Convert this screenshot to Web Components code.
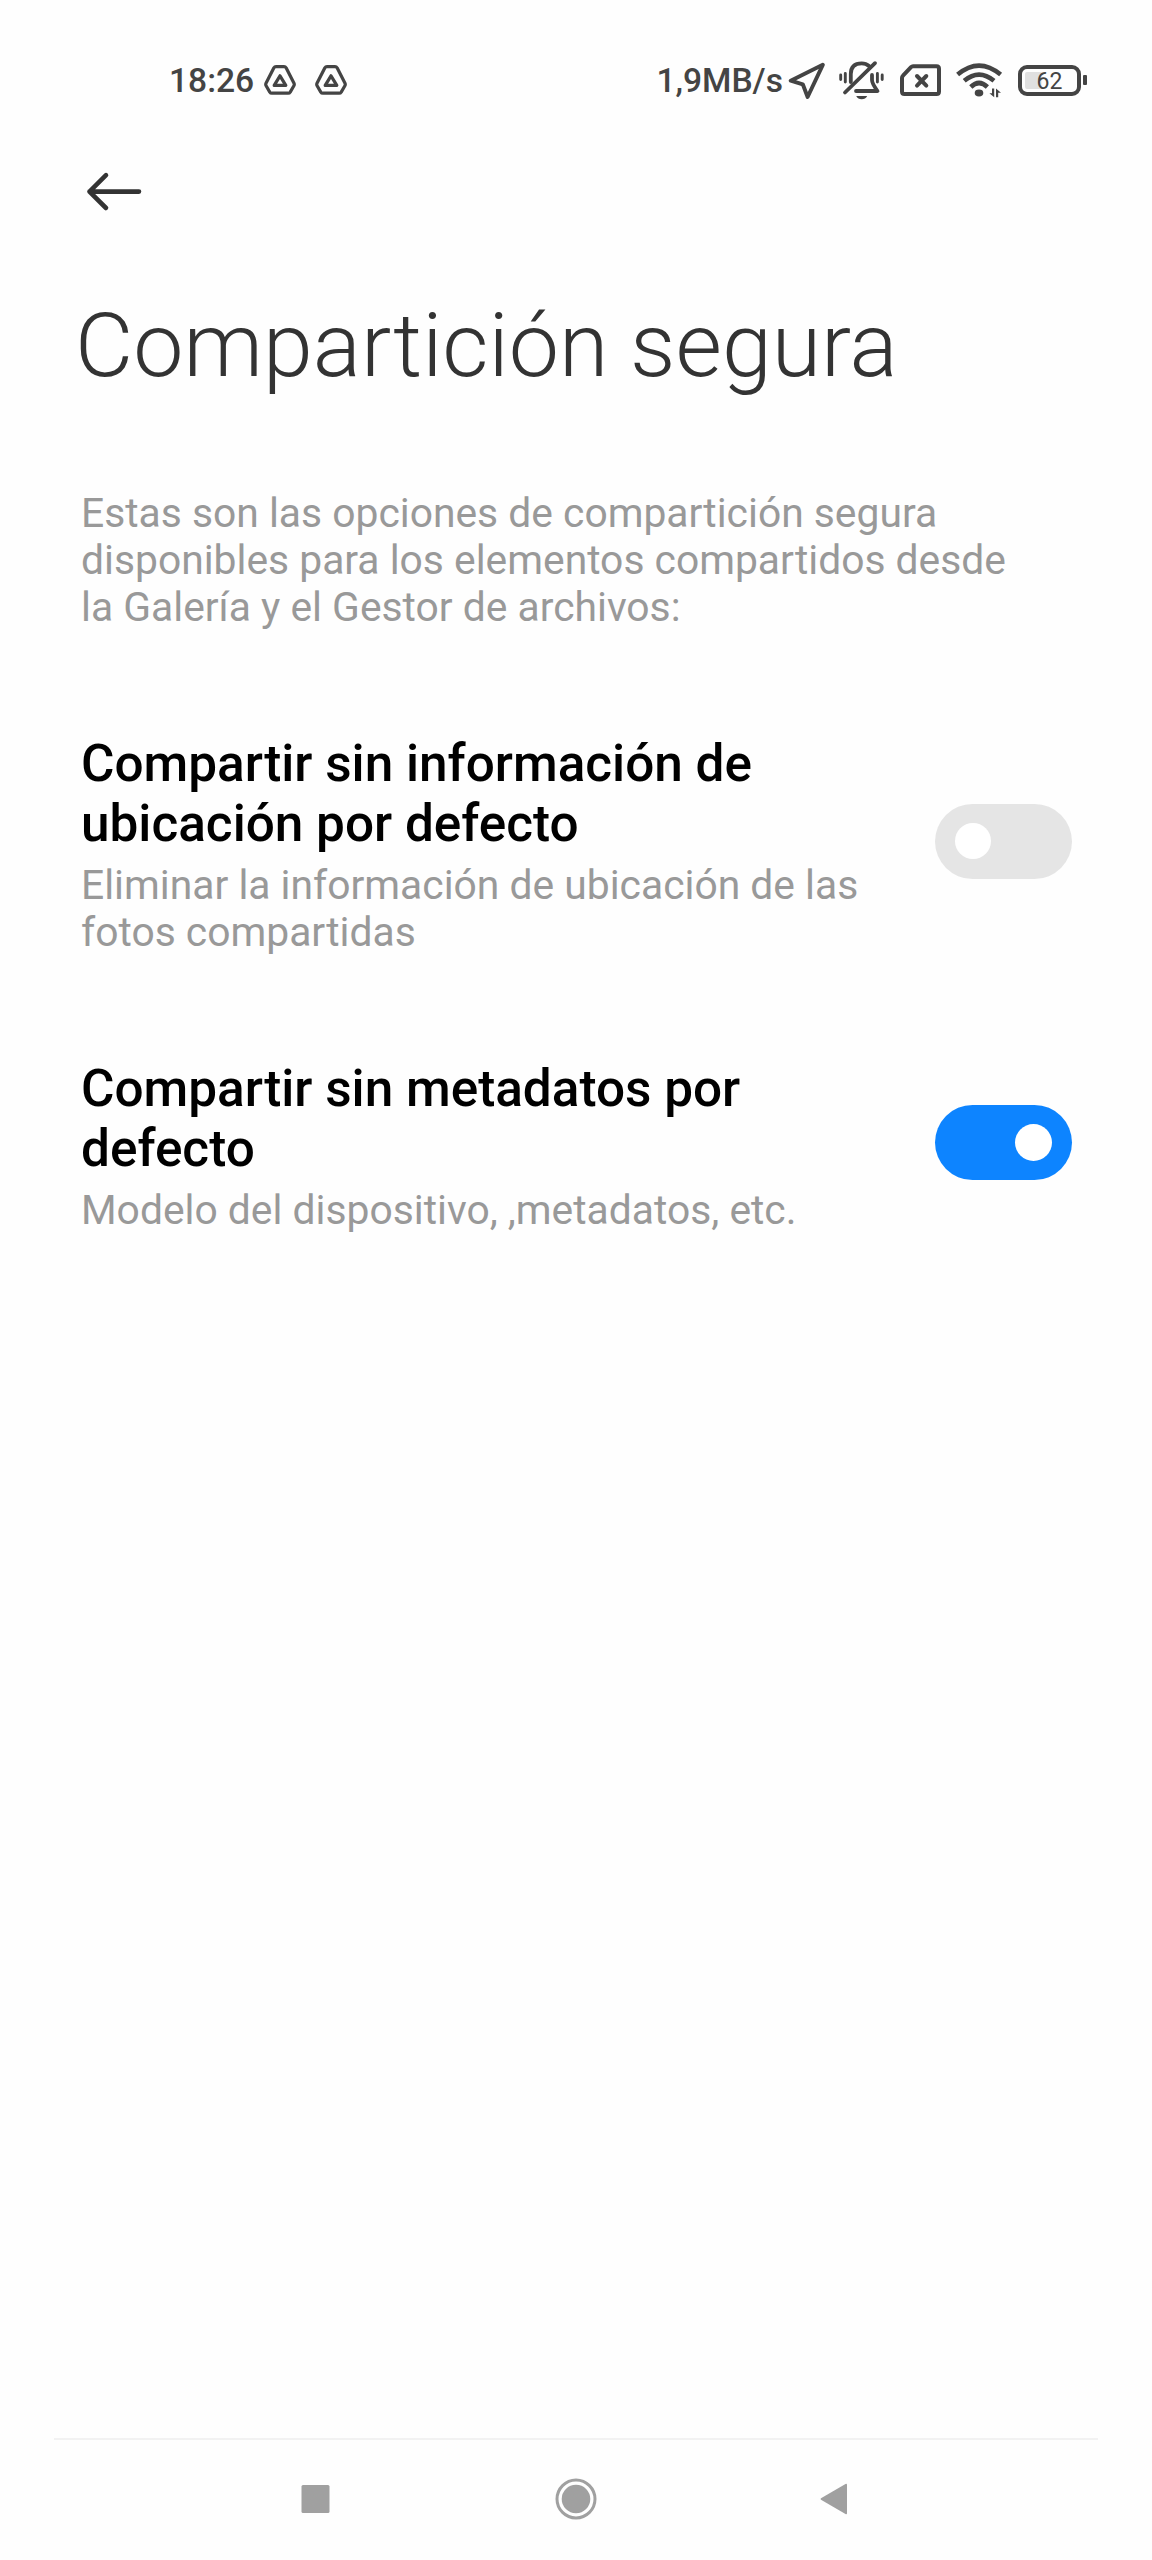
<!DOCTYPE html>
<html lang="es">
<head>
<meta charset="utf-8">
<title>Compartición segura</title>
<style>
	body {
		margin: 0;
		background: #fefefe;
		font-family: Roboto, "Liberation Sans", sans-serif;
	}
</style>
</head>
<body>
<phone-screen>
	<status-bar slot="status" time="18:26" speed="1,9MB/s" battery="62"></status-bar>
	<page-header slot="header">Compartición segura</page-header>
	<page-note>Estas son las opciones de compartición segura disponibles para los elementos compartidos desde la Galería y el Gestor de archivos:</page-note>
	<setting-row>
		<span slot="title">Compartir sin información de ubicación por defecto</span>
		<span slot="summary">Eliminar la información de ubicación de las fotos compartidas</span>
	</setting-row>
	<setting-row on>
		<span slot="title">Compartir sin metadatos por defecto</span>
		<span slot="summary">Modelo del dispositivo, ,metadatos, etc.</span>
	</setting-row>
	<nav-bar slot="nav"></nav-bar>
</phone-screen>

<script>
// drawings for the status bar, each one with its own size
const icons = {
	drive: {
		w: 32, h: 30,
		body: `<g fill="none" stroke="#444" stroke-width="3.2" stroke-linejoin="round">
			<path d="M12 1.6H20Q21.4 1.6 22.1 2.8L30 18.2Q30.6 19.5 29.9 20.7L26.2 27.1Q25.5 28.2 24.2 28.2H7.8Q6.5 28.2 5.8 27.1L2.1 20.7Q1.4 19.5 2 18.2L9.9 2.8Q10.6 1.6 12 1.6Z"/>
			<path d="M16 10.8L21.8 20.4H10.2Z"/></g>`
	},
	location: {
		w: 38, h: 38,
		body: `<path d="M34.8 3.8L2.7 19.7L14.8 23.3L19.6 36Z" fill="none" stroke="#444" stroke-width="3.9" stroke-linejoin="round"/>`
	},
	mute: {
		w: 46, h: 40,
		body: `<g fill="none" stroke="#444" stroke-width="3.8" stroke-linecap="round" stroke-linejoin="round">
			<path d="M11.8 22V14Q11.8 3.3 22.7 3.3Q27 3.3 30 6"/>
			<path d="M33 15V20Q33 23.5 38.5 31H17" />
			<path d="M6 32.5L36 3.2"/>
			<path d="M6.3 13.5V22M1.7 15V19.5M38.4 13.5V22M43.2 15V19.5" stroke-width="2.9"/></g>
			<path d="M17.2 36H28.2Q26.5 39.3 22.7 39.3T17.2 36Z" fill="#444"/>`
	},
	sim: {
		w: 41, h: 32,
		body: `<path d="M13 2.2H36.5Q39 2.2 39 4.7V27.5Q39 30 36.5 30H4.5Q2 30 2 27.5V14Q2 12.7 3 11.7L11 3.2Q12 2.2 13 2.2Z" fill="none" stroke="#444" stroke-width="4"/>
			<path d="M17 12L26.3 21.6M26.3 12L17 21.6" fill="none" stroke="#444" stroke-width="4" stroke-linecap="round"/>`
	},
	wifi: {
		w: 47, h: 36,
		body: `<g fill="none" stroke="#444" stroke-width="4.6">
			<path d="M1.6 12.6Q23 -5.4 44.6 12.6"/>
			<path d="M8.2 18.8Q23 6.4 38 18.8"/>
			<path d="M14.8 25Q23 17 31.4 25"/></g>
			<ellipse cx="23" cy="31" rx="4.3" ry="3.4" fill="#444"/>
			<path d="M38.2 26.6V35.2L33.4 31.2H36V26.6ZM40 35.2V26.6L45 30.8H42.2V35.2Z" fill="#444"/>`
	}
};

class StatusIcon extends HTMLElement {
	constructor() {
		super();
		this.attachShadow({ mode: 'open' });
	}

	connectedCallback() {
		const icon = icons[this.getAttribute('name')];
		this.shadowRoot.innerHTML = `
		<style>
			:host { display: block; }
			svg { display: block; }
		</style>
		<svg width="${icon.w}" height="${icon.h}" viewBox="0 0 ${icon.w} ${icon.h}">${icon.body}</svg>
		`;
	}
}

class BatteryLevel extends HTMLElement {
	constructor() {
		super();
		this.attachShadow({ mode: 'open' });
	}

	connectedCallback() {
		this.shadowRoot.innerHTML = `
		<style>
			:host { display: flex; align-items: center; gap: 2px; padding-right: 1px; }
			.cell {
				box-sizing: border-box;
				width: 63px;
				height: 31px;
				border: 4px solid #444;
				border-radius: 9px;
				padding: 3px;
			}
			.fill {
				height: 17px;
				border-radius: 2px;
				background: linear-gradient(90deg, #e0e0e0 32%, transparent 36%);
				font-size: 23px;
				line-height: 19px;
				text-align: center;
				color: #444;
			}
			.tip { width: 4px; height: 10px; border-radius: 1px; background: #444; }
		</style>
		<div class="cell"><div class="fill">${this.getAttribute('level')}</div></div>
		<div class="tip"></div>
		`;
	}
}

class StatusBar extends HTMLElement {
	constructor() {
		super();
		this.attachShadow({ mode: 'open' });
	}

	connectedCallback() {
		this.shadowRoot.innerHTML = `
		<style>
			:host {
				display: flex;
				justify-content: space-between;
				box-sizing: border-box;
				height: 160px;
				padding: 0 64px 0 169px;
				font-size: 33.6px;
				line-height: 40px;
				color: #444;
			}
			.group { display: flex; align-items: center; }
			.text { font-weight: 500; padding-top: 1px; }
			.time { width: 85px; margin-right: 10px; }
			.speed { margin-right: 5px; }
			#drive2 { margin-left: 19px; }
			#mute { margin-left: 13px; }
			#sim { margin-left: 15px; }
			#wifi { margin-left: 15px; }
			#battery { margin-left: 15px; }
		</style>
		<div class="group">
			<span class="text time">${this.getAttribute('time')}</span>
			<status-icon name="drive"></status-icon>
			<status-icon id="drive2" name="drive"></status-icon>
		</div>
		<div class="group">
			<span class="text speed">${this.getAttribute('speed')}</span>
			<status-icon name="location"></status-icon>
			<status-icon id="mute" name="mute"></status-icon>
			<status-icon id="sim" name="sim"></status-icon>
			<status-icon id="wifi" name="wifi"></status-icon>
			<battery-level id="battery" level="${this.getAttribute('battery')}"></battery-level>
		</div>
		`;
	}
}

class PageHeader extends HTMLElement {
	constructor() {
		super();
		this.attachShadow({ mode: 'open' });
		this.shadowRoot.innerHTML = `
		<style>
			:host { display: block; padding: 10px 75px 0; }
			svg { display: block; margin-left: 11px; }
			h1 {
				margin: 79px 0 0;
				font-size: 89.7px;
				line-height: 106px;
				font-weight: 300;
				color: #333;
			}
		</style>
		<svg width="56" height="44" viewBox="0 0 56 44"><path d="M20 5.2L3.5 21.6L20 38M3.5 21.6H53" fill="none" stroke="#333" stroke-width="4.6" stroke-linecap="round" stroke-linejoin="round"/></svg>
		<h1><slot></slot></h1>
		`;
	}
}

class PageNote extends HTMLElement {
	constructor() {
		super();
		this.attachShadow({ mode: 'open' });
		this.shadowRoot.innerHTML = `
		<style>
			:host {
				display: block;
				width: 950px;
				font-size: 40.8px;
				line-height: 47px;
				color: #999;
			}
		</style>
		<slot></slot>
		`;
	}
}

class ToggleSwitch extends HTMLElement {
	constructor() {
		super();
		this.attachShadow({ mode: 'open' });
		this.shadowRoot.innerHTML = `
		<style>
			:host {
				display: flex;
				align-items: center;
				box-sizing: border-box;
				width: 137px;
				height: 75px;
				padding: 0 20px;
				border-radius: 38px;
				background: #e5e5e5;
			}
			:host([on]) { justify-content: flex-end; background: #0d84ff; }
			.knob { width: 36px; height: 36px; border-radius: 50%; background: #fff; }
			:host([on]) .knob { width: 37px; height: 37px; }
		</style>
		<div class="knob"></div>
		`;
		// flip the switch on click
		this.addEventListener('click', () => this.toggleAttribute('on'));
	}
}

class SettingRow extends HTMLElement {
	constructor() {
		super();
		this.attachShadow({ mode: 'open' });
	}

	connectedCallback() {
		this.shadowRoot.innerHTML = `
		<style>
			:host {
				display: flex;
				align-items: center;
				justify-content: space-between;
				padding-top: 103px;
			}
			.text { width: 800px; }
			.title {
				width: 700px;
				font-size: 51.3px;
				line-height: 60px;
				font-weight: 500;
				color: #000;
			}
			.summary {
				margin-top: 8px;
				font-size: 40.8px;
				line-height: 47px;
				color: #999;
			}
			toggle-switch { margin-bottom: 7px; }
		</style>
		<div class="text">
			<div class="title"><slot name="title"></slot></div>
			<div class="summary"><slot name="summary"></slot></div>
		</div>
		<toggle-switch ${this.hasAttribute('on') ? 'on' : ''}></toggle-switch>
		`;
	}
}

class NavBar extends HTMLElement {
	constructor() {
		super();
		this.attachShadow({ mode: 'open' });
		this.shadowRoot.innerHTML = `
		<style>
			:host {
				display: flex;
				justify-content: center;
				align-items: center;
				gap: 217px;
				height: 118px;
				margin: 0 54px;
				padding-bottom: 2px;
				border-top: 2px solid #f2f2f2;
			}
			svg { display: block; }
		</style>
		<svg width="44" height="44" viewBox="0 0 44 44"><rect x="8.5" y="8" width="28" height="28" rx="1.5" fill="#a0a0a0"/></svg>
		<svg width="44" height="44" viewBox="0 0 44 44"><circle cx="22" cy="22" r="19" fill="none" stroke="#a0a0a0" stroke-width="3"/><circle cx="22" cy="22" r="14.3" fill="#a0a0a0"/></svg>
		<svg width="44" height="44" viewBox="0 0 44 44"><path d="M6 21.2L30.5 6.9Q32 6.2 32 7.8V36.2Q32 37.8 30.5 37.1L6 22.8Q5 22 6 21.2Z" fill="#a0a0a0"/></svg>
		`;
	}
}

class PhoneScreen extends HTMLElement {
	constructor() {
		super();
		this.attachShadow({ mode: 'open' });
		this.shadowRoot.innerHTML = `
		<style>
			:host { display: flex; flex-direction: column; height: 2560px; }
			main { flex: 1; padding: 90.5px 80.5px 0 81px; }
		</style>
		<slot name="status"></slot>
		<slot name="header"></slot>
		<main><slot></slot></main>
		<slot name="nav"></slot>
		`;
	}
}

// register the elements
customElements.define('status-icon', StatusIcon);
customElements.define('battery-level', BatteryLevel);
customElements.define('status-bar', StatusBar);
customElements.define('page-header', PageHeader);
customElements.define('page-note', PageNote);
customElements.define('toggle-switch', ToggleSwitch);
customElements.define('setting-row', SettingRow);
customElements.define('nav-bar', NavBar);
customElements.define('phone-screen', PhoneScreen);
</script>
</body>
</html>
